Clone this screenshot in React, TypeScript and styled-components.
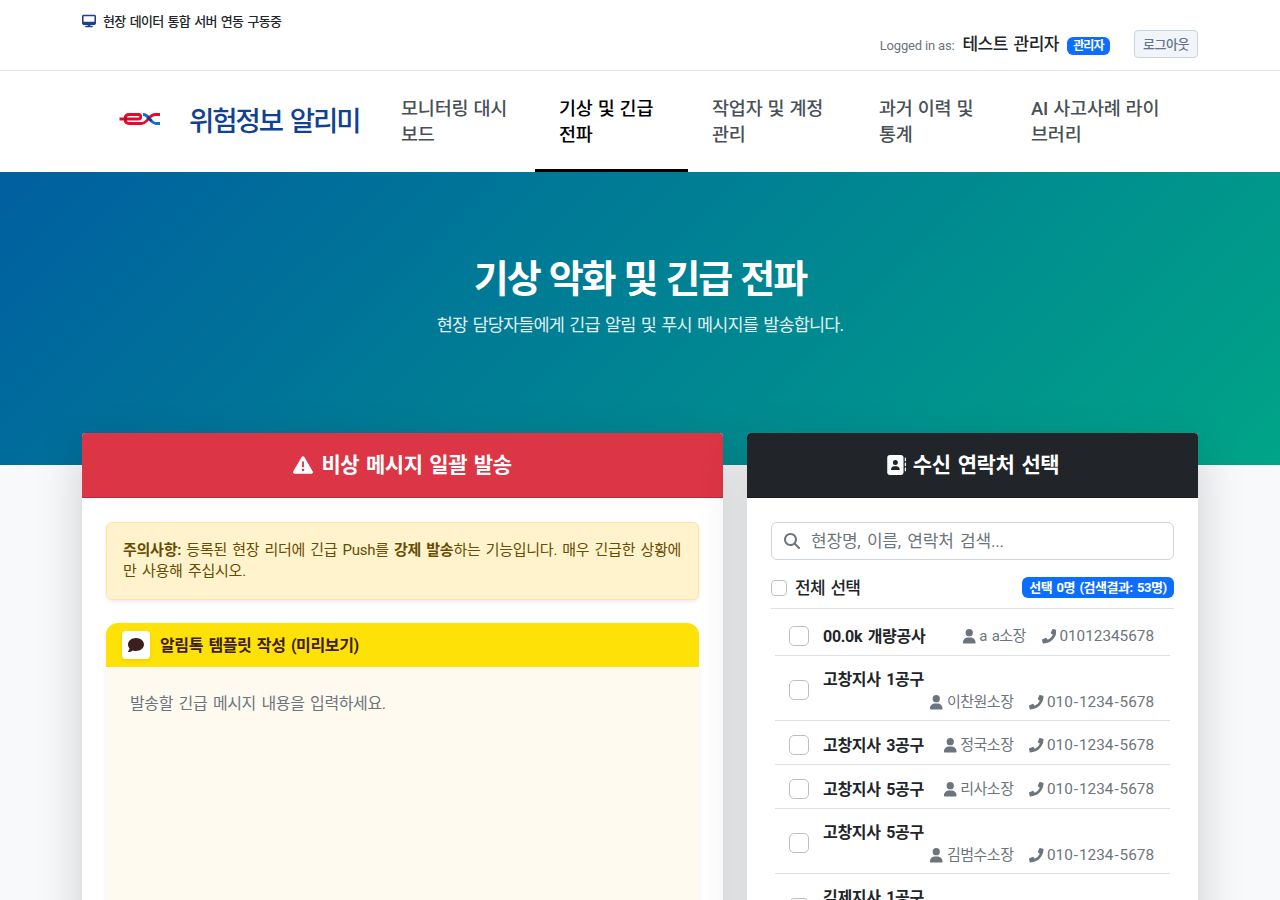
import React from "react";
import styled, { createGlobalStyle } from "styled-components";
import { FaTriangleExclamation, FaAddressBook, FaUser, FaComment, FaMagnifyingGlass, FaDesktop } from "react-icons/fa6";
import { FaPhone } from "react-icons/fa";

const Global = createGlobalStyle`
  *, *::before, *::after { box-sizing: border-box; }
  body {
    margin: 0;
    background: #f8f9fa;
    color: #212529;
    font-family: Roboto, "Noto Sans CJK KR", sans-serif;
    font-size: 16px;
    line-height: 1.5;
  }
  h1, h2, p { margin: 0; }
`;

type TypeProps = {
  $size: number;
  $ls?: number;
  $ws?: number;
  $weight?: number;
  $color?: string;
  $drop?: number;
};
const Text = styled.span<TypeProps>`
  display: block;
  padding-top: ${(p) => p.$drop ?? 0}px;
  font-size: ${(p) => p.$size}px;
  letter-spacing: ${(p) => p.$ls ?? 0}px;
  word-spacing: ${(p) => p.$ws ?? 0}px;
  font-weight: ${(p) => p.$weight ?? 400};
  color: ${(p) => p.$color ?? "inherit"};
  white-space: nowrap;
`;

const Page = styled.div`
  height: 900px;
  overflow: hidden;
`;
const TopBar = styled.div`
  height: 71px;
  background: #fff;
  border-bottom: 1px solid #e5e5e5;
  padding: 0 82px;
  display: flex;
  justify-content: space-between;
`;
const Status = styled.div`
  display: flex;
  align-items: center;
  gap: 7px;
  height: 42px;
  svg { color: #1f3f8f; font-size: 14px; }
`;
const Account = styled.div`
  display: flex;
  align-items: center;
  height: 28px;
  margin-top: 30px;
`;
const UserName = styled(Text)`
  margin: 0 8px;
`;
const Badge = styled.span<{ $h: number; $w: number }>`
  display: flex;
  align-items: center;
  justify-content: center;
  height: ${(p) => p.$h}px;
  width: ${(p) => p.$w}px;
  border-radius: 6px;
  background: #0d6efd;
  color: #fff;
`;
const RoleBadge = styled(Badge)`
  margin-top: 4px;
`;
const CountBadge = styled(Badge)`
  margin-bottom: 2px;
`;
const Logout = styled.button`
  width: 64px;
  height: 28px;
  margin-left: 24px;
  padding: 0;
  border: 1px solid #cbd5e1;
  border-radius: 4px;
  background: #f1f5f9;
  color: #64748b;
  font-family: inherit;
  line-height: 1;
  display: flex;
  align-items: center;
  justify-content: center;
`;
const Header = styled.header`
  height: 101px;
  background: #fff;
  display: flex;
  padding-left: 119px;
`;
const Brand = styled.div`
  width: 258px;
  display: flex;
  align-items: center;
  gap: 28px;
  svg { margin-bottom: 5px; }
`;
const NavLink = styled.a<{ $w: number; $active?: boolean }>`
  width: ${(p) => p.$w}px;
  height: 101px;
  padding: 25px 0 0 24px;
  color: ${(p) => (p.$active ? "#000" : "#495057")};
  border-bottom: 3px solid ${(p) => (p.$active ? "#000" : "transparent")};
  line-height: 26px;
  display: flex;
  flex-direction: column;
`;
const Hero = styled.section`
  height: 293px;
  padding-top: 77px;
  background: linear-gradient(135deg, #005fa0 0%, #00a487 100%);
  color: #fff;
  display: flex;
  flex-direction: column;
  align-items: center;
`;
const HeroTitle = styled.h1`
  line-height: 60px;
  height: 60px;
`;
const HeroLead = styled.p`
  margin-top: 1px;
  line-height: 30px;
  opacity: 0.88;
`;
const Columns = styled.main`
  margin: -32px 82px 0;
  display: grid;
  grid-template-columns: 641px 451px;
  gap: 24px;
`;
const Card = styled.section`
  position: relative;
  height: 640px;
  background: #fff;
  border-radius: 4px;
  box-shadow: 0 16px 48px rgba(0, 0, 0, 0.175);
`;
const CardHead = styled.h2<{ $bg: string; $gap: number }>`
  height: 65px;
  background: ${(p) => p.$bg};
  color: #fff;
  border-bottom: 1px solid rgba(0, 0, 0, 0.175);
  border-radius: 4px 4px 0 0;
  display: flex;
  align-items: center;
  justify-content: center;
  gap: ${(p) => p.$gap}px;
  font-size: 20px;
`;
const CardBody = styled.div`
  padding: 24px;
`;
const Notice = styled.div`
  height: 78px;
  padding: 17px 16px 0;
  border: 1px solid #ffe69c;
  border-radius: 6px;
  background: #fff3cd;
  color: #664d03;
  line-height: 21px;
  box-shadow: 0 2px 4px rgba(0, 0, 0, 0.075);
`;
const Template = styled.div`
  margin-top: 23px;
  height: 420px;
  border-radius: 12px;
  overflow: hidden;
  background: #fffaf0;
  box-shadow: 0 2px 4px rgba(0, 0, 0, 0.075);
`;
const TemplateHead = styled.div`
  height: 44px;
  padding: 0 16px;
  background: #fee106;
  color: #3c1e1e;
  display: flex;
  align-items: center;
  gap: 10px;
`;
const TalkIcon = styled.span`
  width: 28px;
  height: 28px;
  border-radius: 4px;
  background: #fff;
  box-shadow: 0 2px 4px rgba(0, 0, 0, 0.075);
  display: flex;
  align-items: center;
  justify-content: center;
  font-size: 16px;
`;
const Message = styled.div`
  padding: 25px 24px;
  color: #6c757d;
  line-height: 24px;
`;
const Search = styled.div`
  height: 38px;
  border: 1px solid #ced4da;
  border-radius: 6px;
  padding: 0 12px;
  display: flex;
  align-items: center;
  gap: 11px;
  color: #6c757d;
`;
const SelectAll = styled.div`
  height: 49px;
  padding-top: 8px;
  border-bottom: 1px solid #dee2e6;
  display: flex;
  align-items: center;
  justify-content: space-between;
`;
const AllLabel = styled.label`
  display: flex;
  align-items: center;
  gap: 8px;
`;
const Check = styled.span<{ $s: number }>`
  width: ${(p) => p.$s}px;
  height: ${(p) => p.$s}px;
  flex: none;
  border: 1px solid #bfbfbf;
  border-radius: ${(p) => (p.$s > 16 ? 5 : 4)}px;
  background: #fff;
`;
const List = styled.div`
  padding: 3px 4px 0;
`;
const Row = styled.div<{ $h: number }>`
  height: ${(p) => p.$h}px;
  padding: 4px 16px 0 14px;
  border-bottom: 1px solid #dee2e6;
  display: flex;
  align-items: center;
  gap: 14px;
`;
const RowText = styled.div<{ $wrap?: boolean }>`
  flex: 1;
  padding-top: 2px;
  display: flex;
  flex-direction: ${(p) => (p.$wrap ? "column" : "row")};
  justify-content: space-between;
  align-items: ${(p) => (p.$wrap ? "stretch" : "center")};
  line-height: 23px;
`;
const Details = styled.div`
  display: flex;
  justify-content: flex-end;
  gap: 16px;
  color: #6c757d;
`;
const Detail = styled.span`
  display: flex;
  align-items: center;
  gap: 3px;
  svg { font-size: 14.5px; }
`;
const Dash = styled.span`
  padding: 0 1px;
`;

const Phone = ({ value }: { value: string }) => (
  <Text $size={15.3}>
    {value.split("-").map((part, i) => (
      <React.Fragment key={i}>
        {i > 0 && <Dash>-</Dash>}
        {part}
      </React.Fragment>
    ))}
  </Text>
);

const Logo = () => (
  <svg width="42" height="16" viewBox="0 0 42 16" fill="none">
    <path d="M24 3.5C31 3.5 30.5 12.5 37.5 12.5H41" stroke="#0a70cf" strokeWidth="2.8" />
    <path d="M0.500 8H19.5C22.5 8 22.5 3.5 19.5 3.5H10.5C7.500 3.5 6 5 6 8C6 11 7.500 12.500 10.5 12.5H22C29.5 12.5 29 3.5 36.5 3.5H41" stroke="#e6092b" strokeWidth="2.8" />
    <path d="M28.2 6L32.6 10" stroke="#123a94" strokeWidth="3" />
    <circle cx="6.3" cy="8" r="1.5" fill="#8c1a28" />
  </svg>
);

const nav = [
  { w: 158, lines: ["모니터링 대시", "보드"] },
  { w: 153, lines: ["기상 및 긴급", "전파"], active: true },
  { w: 167, lines: ["작업자 및 계정", "관리"] },
  { w: 152, lines: ["과거 이력 및", "통계"] },
  { w: 176, lines: ["AI 사고사례 라이", "브러리"] },
];

const contacts = [
  { site: "00.0k 개량공사", name: "a a소장", phone: "01012345678", h: 44 },
  { site: "고창지사 1공구", name: "이찬원소장", phone: "010-1234-5678", h: 65, wrap: true },
  { site: "고창지사 3공구", name: "정국소장", phone: "010-1234-5678", h: 44 },
  { site: "고창지사 5공구", name: "리사소장", phone: "010-1234-5678", h: 44 },
  { site: "고창지사 5공구", name: "김범수소장", phone: "010-1234-5678", h: 65, wrap: true },
  { site: "김제지사 1공구", name: "김소장", phone: "010-1234-5678", h: 65, wrap: true },
];

export default function App() {
  return (
    <Page>
      <Global />
      <TopBar>
        <Status>
          <FaDesktop />
          <Text $size={13} $ls={-0.7} $ws={1.6} $weight={500} $drop={1}>현장 데이터 통합 서버 연동 구동중</Text>
        </Status>
        <Account>
          <Text $size={13} $ls={-0.17} $color="#6c757d" $drop={3}>Logged in as:</Text>
          <UserName $size={17} $ls={-0.5} $ws={2} $weight={500} $drop={2}>테스트 관리자</UserName>
          <RoleBadge $w={43} $h={18}><Text $size={12} $ls={-0.8} $weight={700}>관리자</Text></RoleBadge>
          <Logout><Text $size={13} $ls={-0.5} $weight={500}>로그아웃</Text></Logout>
        </Account>
      </TopBar>
      <Header>
        <Brand>
          <Logo />
          <Text $size={27.5} $ls={-2.05} $ws={3} $weight={500} $color="#0f4392" $drop={1}>위험정보 알리미</Text>
        </Brand>
        {nav.map((n) => (
          <NavLink key={n.w} $w={n.w} $active={n.active}>
            {n.lines.map((l) => <Text key={l} $size={18.5} $ls={-0.15} $ws={0.5} $weight={500}>{l}</Text>)}
          </NavLink>
        ))}
      </Header>
      <Hero>
        <HeroTitle><Text $size={38} $ls={-2} $ws={1.5} $weight={700}>기상 악화 및 긴급 전파</Text></HeroTitle>
        <HeroLead><Text $size={17.5} $ls={-0.83} $ws={1.7}>현장 담당자들에게 긴급 알림 및 푸시 메시지를 발송합니다.</Text></HeroLead>
      </Hero>
      <Columns>
        <Card>
          <CardHead $bg="#dc3545" $gap={8}><FaTriangleExclamation /><Text $size={21} $ls={-0.45} $ws={2} $weight={700} $drop={2}>비상 메시지 일괄 발송</Text></CardHead>
          <CardBody>
            <Notice>
              <Text $size={15} $ls={-0.25} $ws={1.7}><b>주의사항:</b> 등록된 현장 리더에 긴급 Push를 <b>강제 발송</b>하는 기능입니다. 매우 긴급한 상황에</Text>
              <Text $size={15} $ls={-0.25} $ws={1.9}>만 사용해 주십시오.</Text>
            </Notice>
            <Template>
              <TemplateHead>
                <TalkIcon><FaComment /></TalkIcon>
                <Text $size={16} $ls={-0.38} $ws={1.8} $weight={700} $drop={2}>알림톡 템플릿 작성 (미리보기)</Text>
              </TemplateHead>
              <Message><Text $size={16} $ls={-0.38} $ws={2}>발송할 긴급 메시지 내용을 입력하세요.</Text></Message>
            </Template>
          </CardBody>
        </Card>
        <Card>
          <CardHead $bg="#212529" $gap={7}><FaAddressBook /><Text $size={21} $ls={-0.45} $ws={2.4} $weight={700} $drop={2}>수신 연락처 선택</Text></CardHead>
          <CardBody>
            <Search><FaMagnifyingGlass /><Text $size={17} $ls={-0.2} $ws={2.4} $drop={2}>현장명, 이름, 연락처 검색...</Text></Search>
            <SelectAll>
              <AllLabel><Check $s={16} /><Text $size={17} $ls={-0.7} $ws={2} $weight={500} $drop={2}>전체 선택</Text></AllLabel>
              <CountBadge $w={152} $h={21}><Text $size={13} $ls={-0.45} $ws={1.5} $weight={700} $drop={2}>선택 0명 (검색결과: 53명)</Text></CountBadge>
            </SelectAll>
            <List>
              {contacts.map((c, i) => (
                <Row key={i} $h={c.h}>
                  <Check $s={20} />
                  <RowText $wrap={c.wrap}>
                    <Text $size={16} $ls={-0.3} $ws={1.8} $weight={700}>{c.site}</Text>
                    <Details>
                      <Detail><FaUser /><Text $size={15} $ls={-0.5} $ws={1.5}>{c.name}</Text></Detail>
                      <Detail><FaPhone /><Phone value={c.phone} /></Detail>
                    </Details>
                  </RowText>
                </Row>
              ))}
            </List>
          </CardBody>
        </Card>
      </Columns>
    </Page>
  );
}
